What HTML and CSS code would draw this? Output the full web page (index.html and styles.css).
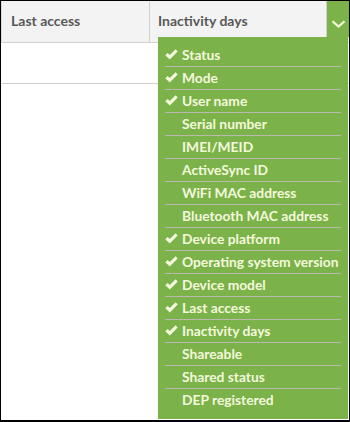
FILE: index.html
```html
<!DOCTYPE html>
<html>
<head>
<meta charset="utf-8">
<link rel="stylesheet" href="styles.css">
</head>
<body>
<div class="frame">
  <div class="header">
    <div class="hcell first">Last access</div>
    <div class="hcell second">Inactivity days</div>
    <div class="toggle">
      <svg width="15" height="8" viewBox="0 0 15 8"><path d="M1.5 1.2 L7.5 6.5 L13.5 1.2" fill="none" stroke="#f4f9dc" stroke-width="2.2"/></svg>
    </div>
  </div>
  <div class="row"></div>
  <ul class="menu">
    <li class="on"><span class="ck"></span>Status</li>
    <li class="on"><span class="ck"></span>Mode</li>
    <li class="on"><span class="ck"></span>User name</li>
    <li><span class="ck"></span>Serial number</li>
    <li><span class="ck"></span>IMEI/MEID</li>
    <li><span class="ck"></span>ActiveSync ID</li>
    <li><span class="ck"></span>WiFi MAC address</li>
    <li><span class="ck"></span>Bluetooth MAC address</li>
    <li class="on"><span class="ck"></span>Device platform</li>
    <li class="on"><span class="ck"></span>Operating system version</li>
    <li class="on"><span class="ck"></span>Device model</li>
    <li class="on"><span class="ck"></span>Last access</li>
    <li class="on"><span class="ck"></span>Inactivity days</li>
    <li><span class="ck"></span>Shareable</li>
    <li><span class="ck"></span>Shared status</li>
    <li><span class="ck"></span>DEP registered</li>
  </ul>
</div>
</body>
</html>
```

FILE: styles.css
```css
* { box-sizing: border-box; }
html, body { margin: 0; padding: 0; background: #fff; }
.frame {
  position: relative;
  width: 350px;
  height: 422px;
  border: 1px solid #000;
  border-bottom-width: 2px;
  background: #fff;
  font-family: Lato, "Open Sans", sans-serif;
}
.header {
  display: flex;
  height: 42px;
  background: #f3f3f3;
  border-bottom: 1px solid #d0d0d0;
  border-left: 1px solid #d8d8d8;
}
.hcell {
  display: flex;
  align-items: center;
  padding-left: 9px;
  padding-bottom: 2px;
  font-size: 14px;
  font-weight: 700;
  color: #595959;
}
.hcell.first { width: 148px; border-right: 1px solid #d0d0d0; }
.hcell.second { flex: 1; border-right: 1px solid #d0d0d0; padding-left: 8px; }
.toggle {
  width: 22px;
  height: 36px;
  background: #7bb24a;
  display: flex;
  align-items: center;
  justify-content: center;
  padding-top: 10px;
  padding-left: 1px;
}
.row { height: 41px; border-bottom: 1px solid #d0d0d0; }
.menu {
  position: absolute;
  left: 157px;
  top: 36px;
  width: 190px;
  height: 382px;
  margin: 0;
  padding: 7px 7px 8px 7px;
  list-style: none;
  background: #7bb24a;
}
.menu li {
  display: flex;
  align-items: center;
  height: 23px;
  padding-bottom: 2px;
  border-bottom: 1px solid #b9b9b2;
  font-size: 13.8px;
  font-weight: 700;
  color: #f4f9dc;
  white-space: nowrap;
}
.menu li:last-child { border-bottom: none; height: 22px; }
.ck {
  width: 17px;
  height: 11px;
  flex: none;
}
.on .ck {
  background: no-repeat 0 0 / 13px 11px url("data:image/svg+xml,%3Csvg xmlns='http://www.w3.org/2000/svg' viewBox='0 0 13 11'%3E%3Cpath d='M0.3 6.2 L2.6 3.9 L4.8 6.1 L10.6 0.3 L12.7 2.5 L4.8 10.4 Z' fill='%23f4f9dc'/%3E%3C/svg%3E");
}
```
